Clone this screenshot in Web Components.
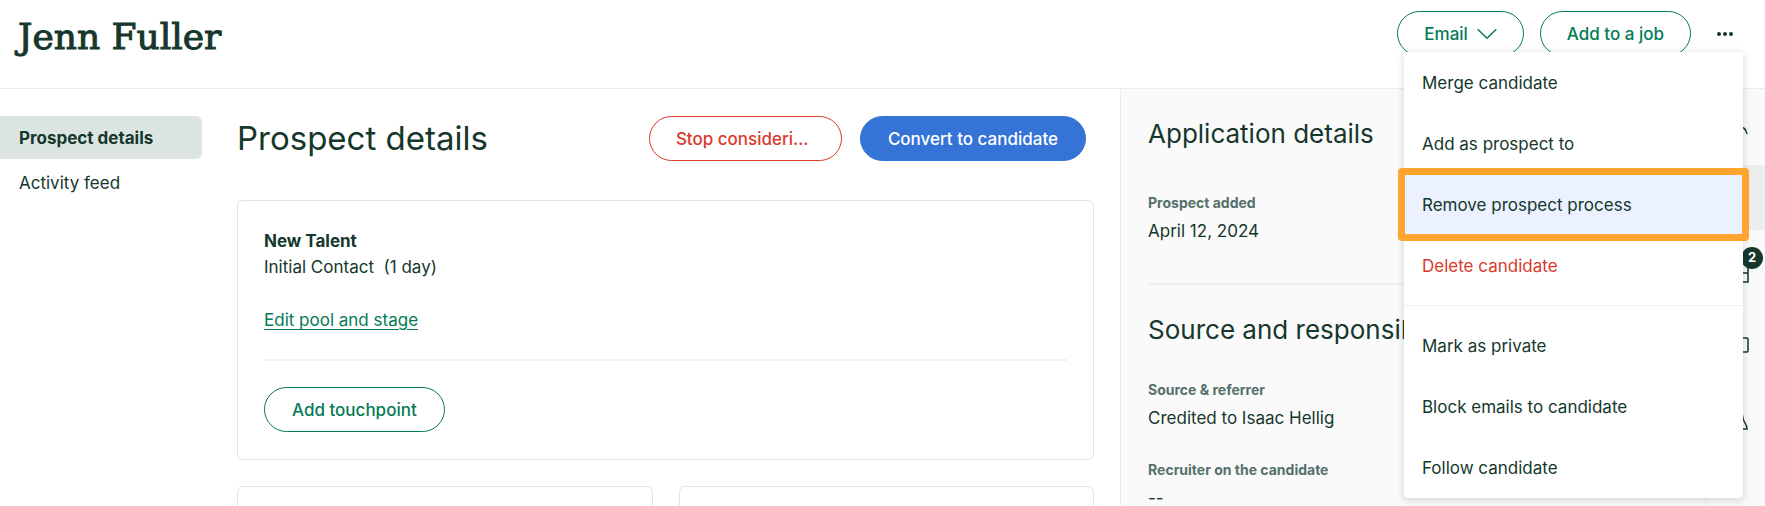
<!DOCTYPE html>
<html lang="en">
<head>
<meta charset="utf-8">
<title>Jenn Fuller</title>
<style>
:root{--ink:#15372c;--muted:#55706a;--green:#047a57;--red:#d93a2b;--blue:#3574d6;--line:#e3e5e4;--rule:#eff0f0;--panel:#fafafa}
body{margin:0;background:#fff;color:var(--ink);font:18px/27px Inter,"Liberation Sans",sans-serif}
</style>
</head>
<body>
<candidate-page></candidate-page>
<script>
const define = (name, html, init) => {
  const template = document.createElement('template');
  template.innerHTML = html;
  customElements.define(name, class extends HTMLElement {
    constructor() {
      super();
      this.attachShadow({ mode: 'open' }).append(template.content.cloneNode(true));
      if (init) init(this);
    }
  });
};

define('pill-button', `
<style>
:host{display:block;flex:none}
button{box-sizing:border-box;width:100%;height:45px;padding:1px 26px 0;display:flex;align-items:center;gap:9px;border:1px solid var(--green);border-radius:23px;background:#fff;color:var(--green);font:500 17px/27px Inter,"Liberation Sans",sans-serif;white-space:nowrap}
:host([tone=danger]) button{border-color:var(--red);color:var(--red)}
:host([tone=primary]) button{padding:1px 27px 0;border-color:var(--blue);background:var(--blue);color:#fff}
:host([wide]) button{padding:1px 27px 0}
</style>
<button type="button"><slot></slot></button>`);

define('side-nav', `
<style>
:host{display:block;padding-top:27px}
nav{display:flex;flex-direction:column;gap:2px;margin-right:35px}
a{padding:9px 19px 7px;color:inherit;text-decoration:none;border-radius:0 6px 6px 0;font-size:17px}
a[aria-current]{background:#dce5e1;font-weight:700}
</style>
<nav aria-label="Candidate"><a href="#details" aria-current="page">Prospect details</a><a href="#feed">Activity feed</a></nav>`);

define('info-card', `
<style>:host{display:block;box-sizing:border-box;border:1px solid var(--line);border-radius:6px;padding:27px 26px;background:#fff}</style>
<slot></slot>`);

define('detail-field', `
<style>
:host{display:block}
dl,dd{margin:0}
dt{color:var(--muted);font-weight:700;font-size:14px;line-height:24px}
dd{font-size:17px;line-height:32px}
</style>
<dl><dt><slot name="label"></slot></dt><dd><slot></slot></dd></dl>`);

define('menu-item', `
<style>
:host{display:block;position:relative}
button{width:100%;height:61px;padding:2px 18px 0;border:0;background:none;text-align:left;color:var(--ink);font:17px/27px Inter,"Liberation Sans",sans-serif}
:host([danger]) button{color:var(--red)}
:host([focused]) button{background:#ebf1fe}
:host([focused])::after{content:"";position:absolute;inset:-6px;border:7px solid #ffa42e;border-radius:4px}
</style>
<button type="button" role="menuitem"><slot></slot></button>`);

define('more-menu', `
<style>
:host{display:block;position:relative;flex:none}
.trigger{width:36px;height:45px;border:0;padding:0;background:none;display:grid;place-items:center}
.list{position:absolute;z-index:5;top:41px;right:0;width:339px;background:#fff;border-radius:4px;box-shadow:0 2px 8px rgba(21,55,44,.2)}
hr{border:0;border-top:1px solid var(--rule);margin:9px 0}
</style>
<button class="trigger" type="button" aria-label="More actions" aria-expanded="true"><svg width="18" height="6" fill="#15372c"><circle cx="3" cy="3" r="2"/><circle cx="9" cy="3" r="2"/><circle cx="15" cy="3" r="2"/></svg></button>
<div class="list" role="menu">
<menu-item>Merge candidate</menu-item>
<menu-item>Add as prospect to</menu-item>
<menu-item focused>Remove prospect process</menu-item>
<menu-item danger>Delete candidate</menu-item>
<hr>
<menu-item>Mark as private</menu-item>
<menu-item>Block emails to candidate</menu-item>
<menu-item>Follow candidate</menu-item>
</div>`);

define('page-header', `
<style>
:host{display:flex;justify-content:space-between;box-sizing:border-box;height:89px;padding:11px 22px 0 18px;border-bottom:1px solid #eaecec}
h1{margin:0;font:36px/52px "DejaVu Serif",serif;-webkit-text-stroke:1px var(--ink)}
.actions{display:flex;gap:16px;align-items:flex-start}
</style>
<h1>Jenn Fuller</h1>
<div class="actions">
<pill-button>Email <svg width="20" height="12" fill="none" stroke="currentColor" stroke-width="1.5"><path d="M.7 1.2 10 10.2l9.3-9"/></svg></pill-button>
<pill-button>Add to a job</pill-button>
<more-menu></more-menu>
</div>`);

define('prospect-main', `
<style>
:host{display:block;padding:27px 26px 0 0;min-width:0}
header{display:flex;align-items:center;gap:18px;margin:0 8px 39px 0}
h2{margin:0;flex:1;font-size:33px;font-weight:400;line-height:45px}
.stop{width:193px}
.title{font-weight:700;font-size:17px;line-height:26px}
p{margin:0;font-size:17px;line-height:26px;white-space:pre}
a{display:inline-block;margin-top:27px;color:var(--green);font-size:17px;line-height:26px;text-underline-offset:3px}
hr{border:0;height:2px;background:var(--rule);margin:26px 0}
.add{display:flex}
.pair{display:grid;grid-template-columns:1fr 1fr;gap:26px;margin-top:26px}
.pair info-card{min-height:180px}
</style>
<header><h2>Prospect details</h2><pill-button class="stop" tone="danger">Stop consideri…</pill-button><pill-button tone="primary">Convert to candidate</pill-button></header>
<info-card>
<div class="title">New Talent</div>
<p>Initial Contact  (1 day)</p>
<a href="#edit">Edit pool and stage</a>
<hr>
<div class="add"><pill-button wide>Add touchpoint</pill-button></div>
</info-card>
<div class="pair"><info-card></info-card><info-card></info-card></div>`);

define('application-panel', `
<style>
:host{display:block;box-sizing:border-box;background:var(--panel);border:solid #eaecec;border-width:0 1px;padding:27px}
h2{margin:0;font-size:26px;font-weight:400;line-height:36px}
detail-field{margin-top:39px}
hr{border:0;height:2px;background:var(--rule);margin:36px 0 27px}
.fields{display:grid;gap:24px;margin-top:30px}
.fields detail-field{margin:0}
</style>
<h2>Application details</h2>
<detail-field><span slot="label">Prospect added</span>April 12, 2024</detail-field>
<hr>
<h2>Source and responsibility</h2>
<div class="fields">
<detail-field><span slot="label">Source &amp; referrer</span>Credited to Isaac Hellig</detail-field>
<detail-field><span slot="label">Recruiter on the candidate</span>--</detail-field>
</div>`);

define('tool-rail', `
<style>
:host{display:flex;flex-direction:column;gap:8px;padding-top:3px;background:var(--panel)}
button{position:relative;height:65px;border:0;padding:0;background:none;display:grid;place-items:center;color:var(--ink)}
button.on{background:#eceeed}
svg{fill:none;stroke:currentColor;stroke-width:1.5}
.badge{position:absolute;left:35px;top:9px;width:22px;height:22px;border-radius:50%;background:var(--ink);color:#fff;font:700 13px/21px Inter,sans-serif;text-align:center}
</style>
<button type="button" aria-label="Profile"><svg width="26" height="26"><circle cx="13" cy="8" r="5"/><path d="M1 22c1-6 6-9 12-9 6 1 10 3 11 9"/></svg></button>
<button type="button" class="on" aria-label="Application"><svg width="26" height="26"><path d="M5 3h14v20H5z"/></svg></button>
<button type="button" aria-label="Tasks"><svg width="26" height="26"><path d="M1 6h24v18H1zM1 15h24"/></svg><span class="badge">2</span></button>
<button type="button" aria-label="Notes"><svg width="26" height="26"><rect x="1" y="7" width="24" height="14" rx="1"/></svg></button>
<button type="button" aria-label="Reminders"><svg width="26" height="26"><path d="M2 25c1-4 4-5 4-11a7 7 0 0 1 14 0c0 4 4 5 4 11z"/></svg></button>`);

define('candidate-page', `
<style>
:host{display:flex;flex-direction:column;height:100vh;overflow:hidden}
.body{flex:1;min-height:0;display:grid;grid-template-columns:237px minmax(0,1fr) 33.2% 59px}
</style>
<page-header></page-header>
<div class="body"><side-nav></side-nav><prospect-main></prospect-main><application-panel></application-panel><tool-rail></tool-rail></div>`);
</script>
</body>
</html>
